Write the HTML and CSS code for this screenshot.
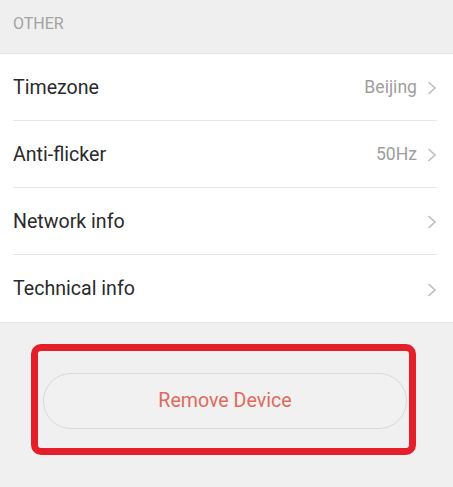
FILE: index.html
```html
<!DOCTYPE html>
<html>
<head>
<meta charset="utf-8">
<link rel="stylesheet" href="styles.css">
</head>
<body>
<div class="page">
  <div class="section-title">OTHER</div>
  <ul class="list">
    <li class="row"><span class="label">Timezone</span><span class="value">Beijing</span><svg class="chev" viewBox="0 0 10 14"><path d="M1.5 1 L8 7 L1.5 13" fill="none" stroke="#bdbdbd" stroke-width="1.6"/></svg></li>
    <li class="row"><span class="label">Anti-flicker</span><span class="value">50Hz</span><svg class="chev" viewBox="0 0 10 14"><path d="M1.5 1 L8 7 L1.5 13" fill="none" stroke="#bdbdbd" stroke-width="1.6"/></svg></li>
    <li class="row"><span class="label">Network info</span><span class="value"></span><svg class="chev" viewBox="0 0 10 14"><path d="M1.5 1 L8 7 L1.5 13" fill="none" stroke="#bdbdbd" stroke-width="1.6"/></svg></li>
    <li class="row"><span class="label">Technical info</span><span class="value"></span><svg class="chev" viewBox="0 0 10 14"><path d="M1.5 1 L8 7 L1.5 13" fill="none" stroke="#bdbdbd" stroke-width="1.6"/></svg></li>
  </ul>
  <div class="action">
    <div class="highlight">
      <button class="remove">Remove Device</button>
    </div>
  </div>
</div>
</body>
</html>
```

FILE: styles.css
```css
* { box-sizing: border-box; }
html, body { margin: 0; padding: 0; }
body {
  background: #f0f0f0;
  font-family: Roboto, "Liberation Sans", sans-serif;
  width: 453px;
  height: 487px;
  overflow: hidden;
}
.page { display: flex; flex-direction: column; }
.section-title {
  height: 54px;
  padding: 14px 0 0 13px;
  font-size: 16px;
  color: #a3a3a3;
  background: #efefef;
  border-bottom: 1px solid #e2e2e2;
}
.list {
  list-style: none;
  margin: 0;
  padding: 0 0 0 13px;
  background: #fff;
  border-bottom: 1px solid #e6e6e6;
}
.row {
  width: 424px;
  height: 67px;
  display: flex;
  align-items: center;
  border-bottom: 1px solid #e6e6e6;
}
.row:last-child { border-bottom: none; }
.label {
  flex: 1;
  font-size: 19.6px;
  color: #2a2a2a;
}
.value {
  font-size: 17.6px;
  color: #9e9e9e;
  margin-right: 10px;
}
.chev { width: 10px; height: 14px; margin-top: 2px; }
.action {
  padding: 21px 0 0 31px;
}
.highlight {
  width: 385px;
  height: 111px;
  border: 7px solid #e51f29;
  border-radius: 10px;
  padding: 22px 0 0 5px;
}
.remove {
  width: 364px;
  height: 56px;
  border: 1px solid #d9d9d9;
  border-radius: 28px;
  background: #f1f1f1;
  color: #e06a5c;
  font-family: Roboto, "Liberation Sans", sans-serif;
  font-size: 19.6px;
  padding: 0 0 2px;
}
```
